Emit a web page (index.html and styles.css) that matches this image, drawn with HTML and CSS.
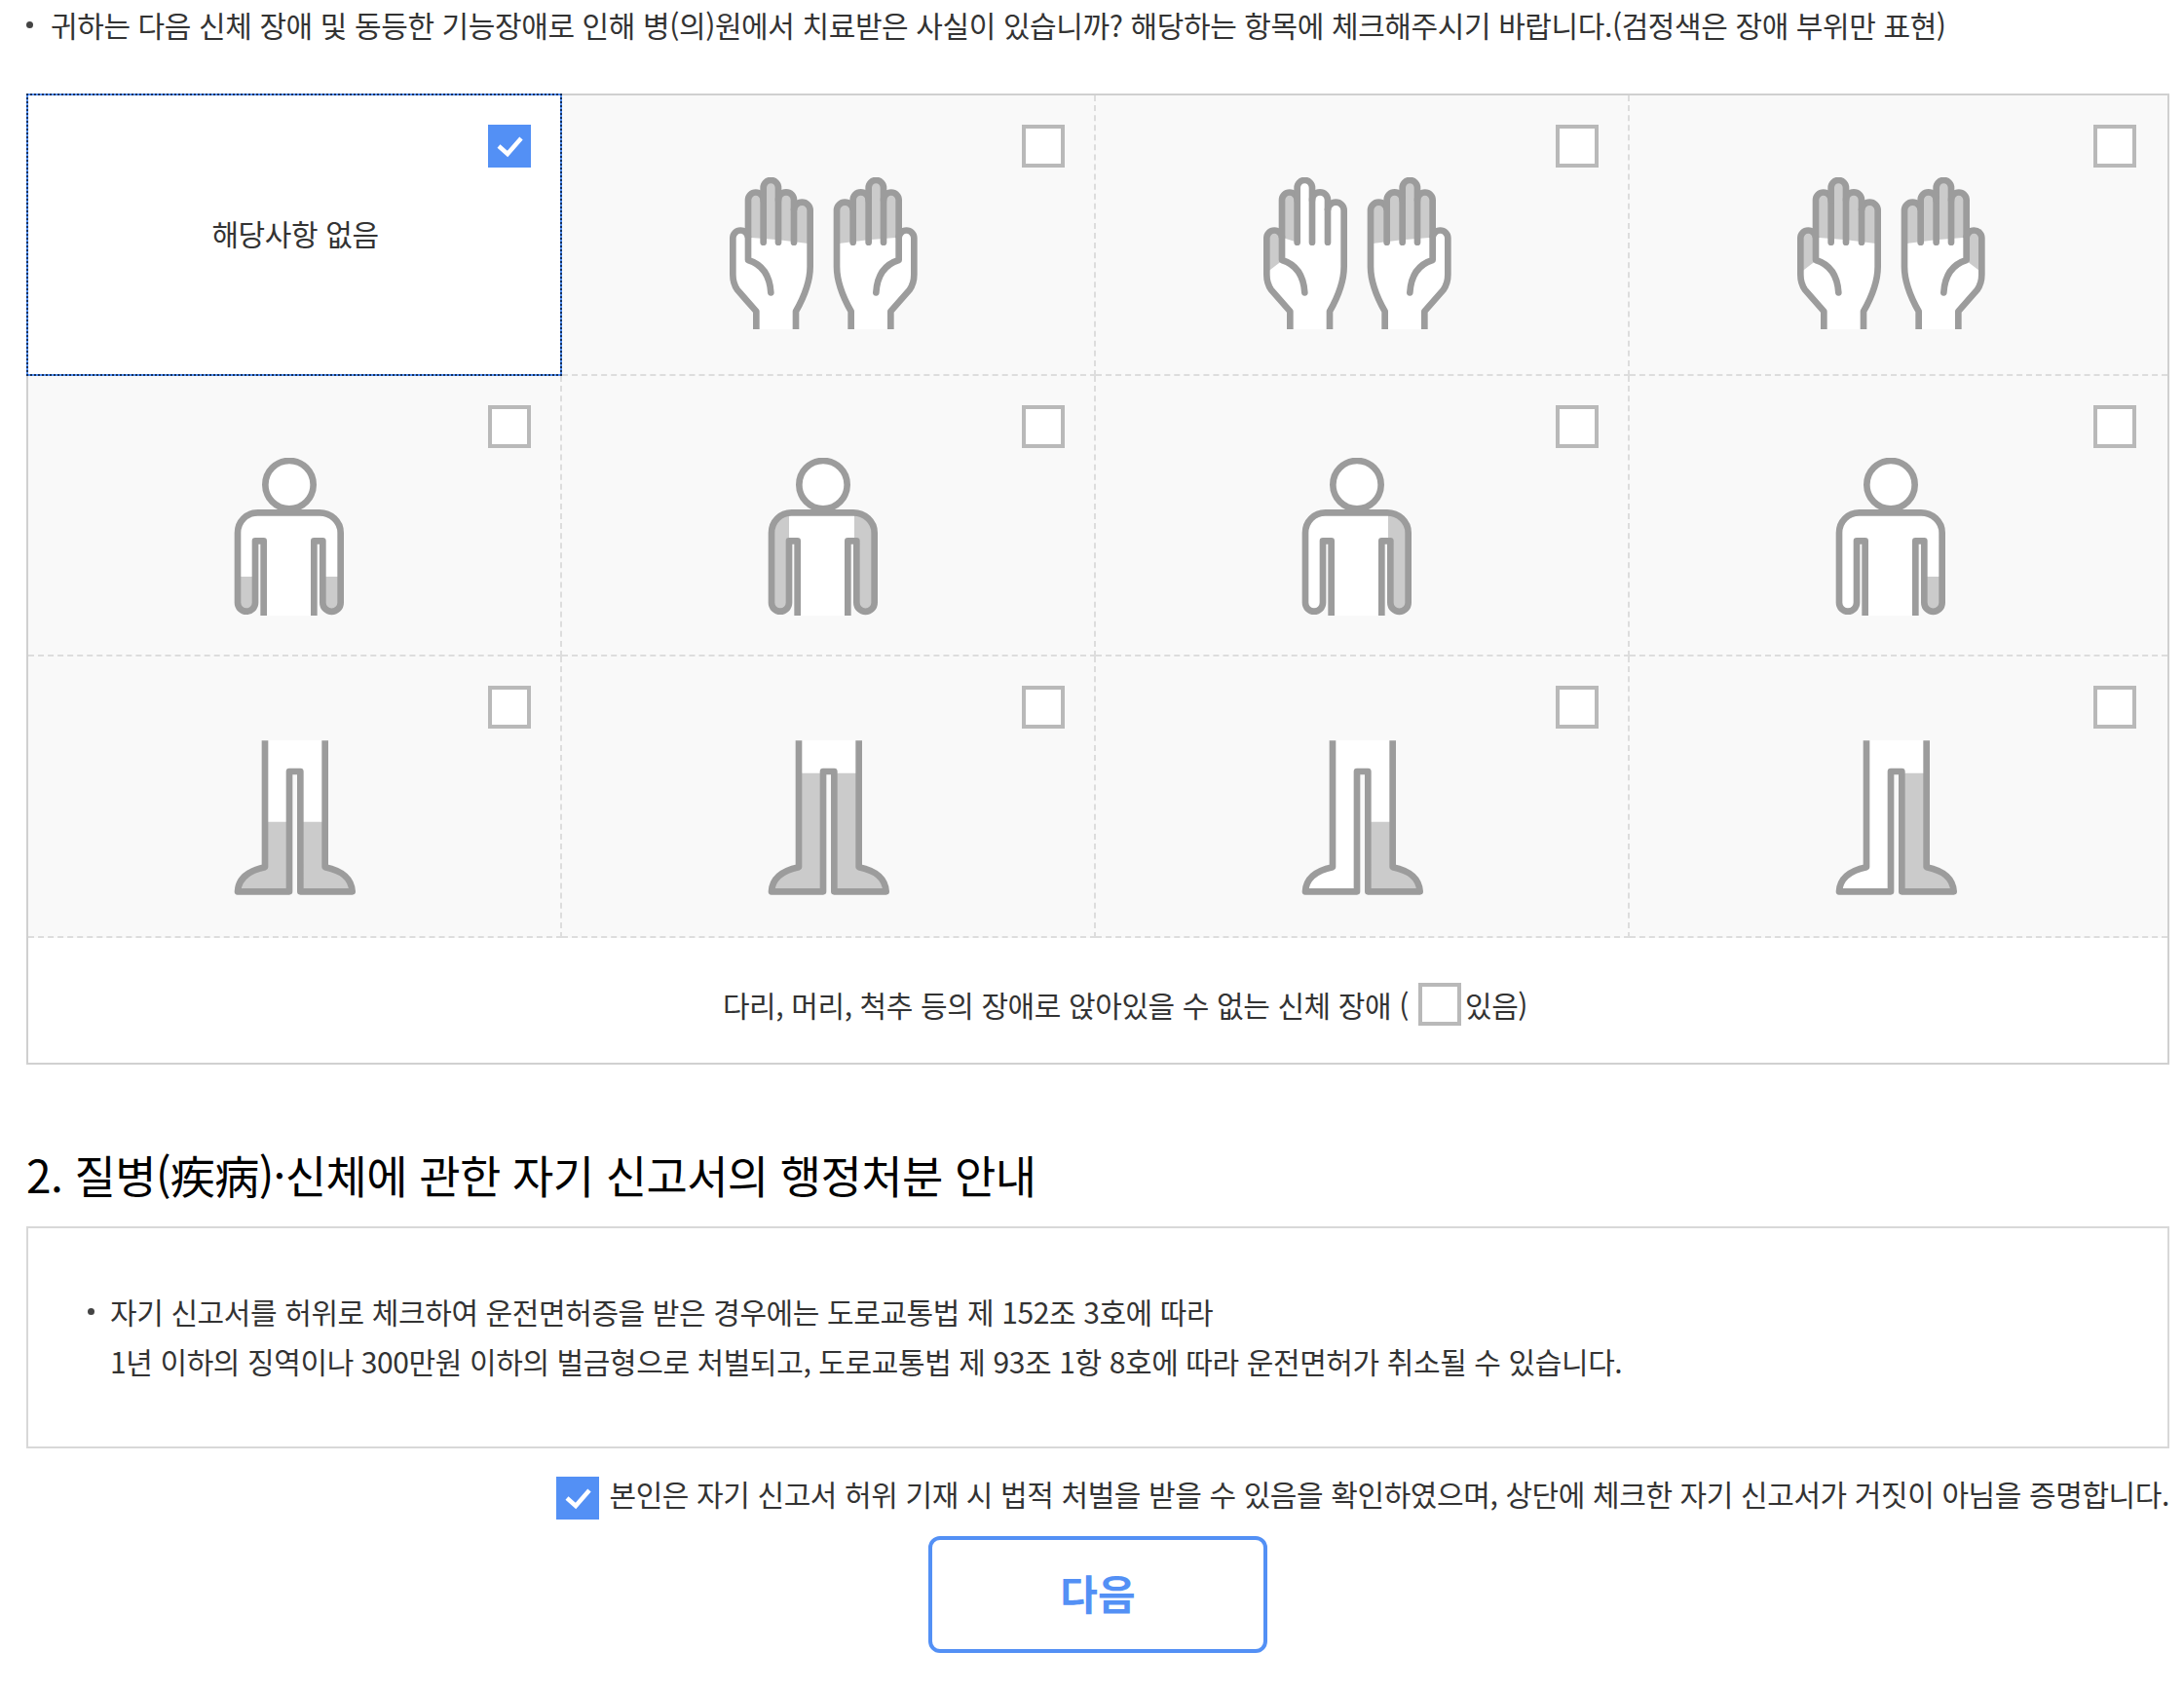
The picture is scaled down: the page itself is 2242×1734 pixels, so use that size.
FILE: index.html
```html
<!DOCTYPE html>
<html lang="ko">
<head>
    <meta charset="UTF-8">
    <meta name="viewport" content="width=device-width, initial-scale=1.0">
    <title>자기 신고서</title>
    <link rel="stylesheet" href="styles.css">
</head>
<body>

    <!-- shared pieces for the body part icons -->
    <svg class="icon-defs">
        <defs>
            <path id="hand-shape" class="skin" d="M230 533V478L172 412Q158 392 158 365V252A23.5 23.5 0 0 1 205 252V135A23.5 23.5 0 0 1 252 135V97A23 23 0 0 1 298 97V135A24 24 0 0 1 346 135V167A25 25 0 0 1 396 167V340Q396 400 352 478V533Z"/>
            <path id="hand-fingers-shade" class="shade" d="M205 250V135A23.5 23.5 0 0 1 252 135V97A23 23 0 0 1 298 97V135A24 24 0 0 1 346 135V167A25 25 0 0 1 396 167V270L300 258L205 250Z"/>
            <path id="hand-index-shade" class="shade" d="M205 250V135A23.5 23.5 0 0 1 252 135V265Z"/>
            <path id="hand-thumb-shade" class="shade" d="M158 358V252A23.5 23.5 0 0 1 205 252V322Z"/>
            <g id="hand-line" class="line">
                <path class="flat" d="M230 533V478L172 412Q158 392 158 365V252A23.5 23.5 0 0 1 205 252"/>
                <path class="flat" d="M346 167A25 25 0 0 1 396 167V340Q396 400 352 478V533"/>
                <path d="M275 420Q270 340 205 320V135A23.5 23.5 0 0 1 252 135V265"/>
                <path d="M252 135V97A23 23 0 0 1 298 97V265"/>
                <path d="M298 135A24 24 0 0 1 346 135V265"/>
            </g>
            <g id="hand-fingers">
                <use href="#hand-shape"/>
                <use href="#hand-fingers-shade"/>
                <use href="#hand-line"/>
            </g>
            <g id="hand-index">
                <use href="#hand-shape"/>
                <use href="#hand-index-shade"/>
                <use href="#hand-thumb-shade"/>
                <use href="#hand-line"/>
            </g>
            <g id="hand-all">
                <use href="#hand-shape"/>
                <use href="#hand-fingers-shade"/>
                <use href="#hand-thumb-shade"/>
                <use href="#hand-line"/>
            </g>

            <g id="person-shape" class="skin">
                <circle cx="262" cy="142" r="74"/>
                <path d="M103 505V290C103 255 130 228 165 228H355C390 228 420 255 420 290V505A27.5 27.5 0 0 1 365 505V315H338V545H183V315H157V505A27 27 0 0 1 103 505Z"/>
            </g>
            <g id="person-line" class="line">
                <circle cx="262" cy="142" r="74"/>
                <path class="flat" d="M183 545V315H157V505A27 27 0 0 1 103 505V290C103 255 130 228 165 228H355C390 228 420 255 420 290V505A27.5 27.5 0 0 1 365 505V315H338V545"/>
            </g>
            <path id="arm-left" class="shade" d="M155 228C125 228 103 255 103 290V505A27 27 0 0 0 157 505V240Z"/>
            <path id="arm-right" class="shade" d="M358 228C392 228 420 255 420 290V505A27.5 27.5 0 0 1 365 505V315H358Z"/>
            <path id="forearm-left" class="shade" d="M103 425V505A27 27 0 0 0 157 505V425Z"/>
            <path id="forearm-right" class="shade" d="M365 425V505A27.5 27.5 0 0 0 420 505V425Z"/>

            <path id="legs-shape" class="skin" d="M187 60V450C140 460 105 480 103 525H268V155H292V525H456C453 480 420 460 372 450V60Z"/>
            <path id="legs-line" class="line flat" d="M187 60V450C140 460 105 480 103 525H262V155H296V525H456C453 480 420 460 372 450V60"/>
            <path id="leg-left" class="shade" d="M187 160V450C140 460 105 480 103 525H262V160Z"/>
            <path id="leg-right" class="shade" d="M372 160V450C420 460 453 480 456 525H296V160Z"/>
            <path id="shin-left" class="shade" d="M187 310V450C140 460 105 480 103 525H262V310Z"/>
            <path id="shin-right" class="shade" d="M372 310V450C420 460 453 480 456 525H296V310Z"/>
        </defs>
    </svg>

    <ul class="intro">
        <li>귀하는 다음 신체 장애 및 동등한 기능장애로 인해 병(의)원에서 치료받은 사실이 있습니까? 해당하는 항목에 체크해주시기 바랍니다.(검정색은 장애 부위만 표현)</li>
    </ul>

    <div class="part-table">
        <!-- row 1 -->
        <label class="part-cell part-none">
            <span class="check is-checked cell-check"><svg viewBox="0 0 44 44"><path d="M11 22L20 30L34 14"/></svg></span>
            해당사항 없음
        </label>
        <label class="part-cell">
            <span class="check cell-check"></span>
            <svg class="part-icon" viewBox="148 65 600 486">
                <use href="#hand-fingers"/>
                <use href="#hand-fingers" transform="translate(874 0) scale(-1 1)"/>
            </svg>
        </label>
        <label class="part-cell">
            <span class="check cell-check"></span>
            <svg class="part-icon" viewBox="148 65 600 486">
                <use href="#hand-index"/>
                <use href="#hand-fingers" transform="translate(874 0) scale(-1 1)"/>
            </svg>
        </label>
        <label class="part-cell last">
            <span class="check cell-check"></span>
            <svg class="part-icon" viewBox="148 65 600 486">
                <use href="#hand-all"/>
                <use href="#hand-all" transform="translate(874 0) scale(-1 1)"/>
            </svg>
        </label>

        <!-- row 2 -->
        <label class="part-cell">
            <span class="check cell-check"></span>
            <svg class="part-icon" viewBox="-26 59 600 486">
                <use href="#person-shape"/>
                <use href="#forearm-left"/>
                <use href="#forearm-right"/>
                <use href="#person-line"/>
            </svg>
        </label>
        <label class="part-cell">
            <span class="check cell-check"></span>
            <svg class="part-icon" viewBox="-26 59 600 486">
                <use href="#person-shape"/>
                <use href="#arm-left"/>
                <use href="#arm-right"/>
                <use href="#person-line"/>
            </svg>
        </label>
        <label class="part-cell">
            <span class="check cell-check"></span>
            <svg class="part-icon" viewBox="-26 59 600 486">
                <use href="#person-shape"/>
                <use href="#arm-right"/>
                <use href="#person-line"/>
            </svg>
        </label>
        <label class="part-cell last">
            <span class="check cell-check"></span>
            <svg class="part-icon" viewBox="-26 59 600 486">
                <use href="#person-shape"/>
                <use href="#forearm-right"/>
                <use href="#person-line"/>
            </svg>
        </label>

        <!-- row 3 -->
        <label class="part-cell">
            <span class="check cell-check"></span>
            <svg class="part-icon" viewBox="-26 53 600 486">
                <use href="#legs-shape"/>
                <use href="#shin-left"/>
                <use href="#shin-right"/>
                <use href="#legs-line"/>
            </svg>
        </label>
        <label class="part-cell">
            <span class="check cell-check"></span>
            <svg class="part-icon" viewBox="-26 53 600 486">
                <use href="#legs-shape"/>
                <use href="#leg-left"/>
                <use href="#leg-right"/>
                <use href="#legs-line"/>
            </svg>
        </label>
        <label class="part-cell">
            <span class="check cell-check"></span>
            <svg class="part-icon" viewBox="-26 53 600 486">
                <use href="#legs-shape"/>
                <use href="#shin-right"/>
                <use href="#legs-line"/>
            </svg>
        </label>
        <label class="part-cell last">
            <span class="check cell-check"></span>
            <svg class="part-icon" viewBox="-26 53 600 486">
                <use href="#legs-shape"/>
                <use href="#leg-right"/>
                <use href="#legs-line"/>
            </svg>
        </label>

        <div class="part-extra">
            다리, 머리, 척추 등의 장애로 앉아있을 수 없는 신체 장애 (
            <span class="check"></span>
            <span class="part-extra-end">있음)</span>
        </div>
    </div>

    <h2 class="section-title">2. 질병(疾病)·신체에 관한 자기 신고서의 행정처분 안내</h2>

    <ul class="notice">
        <li><div>자기 신고서를 허위로 체크하여 운전면허증을 받은 경우에는 도로교통법 제 152조 3호에 따라<br>1년 이하의 징역이나 300만원 이하의 벌금형으로 처벌되고, 도로교통법 제 93조 1항 8호에 따라 운전면허가 취소될 수 있습니다.</div></li>
    </ul>

    <label class="confirm">
        <span class="check is-checked"><svg viewBox="0 0 44 44"><path d="M11 22L20 30L34 14"/></svg></span>
        <span class="confirm-text">본인은 자기 신고서 허위 기재 시 법적 처벌을 받을 수 있음을 확인하였으며, 상단에 체크한 자기 신고서가 거짓이 아님을 증명합니다.</span>
    </label>

    <div class="actions">
        <button class="next-button">다음</button>
    </div>

</body>
</html>
```

FILE: styles.css
```css
/* Basic reset */
* {
    margin: 0;
    padding: 0;
    box-sizing: border-box;
}

body {
    font-family: "Noto Sans CJK KR", "Noto Sans", sans-serif;
    font-size: 30px;
    letter-spacing: -0.4px;
    color: #333;
    background-color: #fff;
    width: 2227px;
    padding-left: 27px;
}

ul {
    list-style: none;
}

.icon-defs {
    display: none;
}

/* Top question */
.intro {
    height: 50px;
    margin-bottom: 46px;
}

.intro li {
    display: flex;
    align-items: center;
    height: 50px;
    line-height: 50px;
    gap: 18px;
}

.intro li::before,
.notice li::before {
    content: "";
    flex: none;
    width: 7px;
    height: 7px;
    border-radius: 50%;
    background-color: #444;
}

/* Checkboxes */
.check {
    display: block;
    flex: none;
    width: 44px;
    height: 44px;
    border: 4px solid #b9b9b9;
    background-color: #fff;
}

.check.is-checked {
    border: none;
    background-color: #5390f5;
}

.check svg {
    display: block;
    width: 44px;
    height: 44px;
}

.check svg path {
    fill: none;
    stroke: #fff;
    stroke-width: 4.5;
}

.cell-check {
    position: absolute;
    top: 30px;
    right: 30px;
}

/* Body part table */
.part-table {
    display: grid;
    grid-template-columns: 548px 548px 548px 1fr;
    grid-template-rows: 288px 288px 289px 128px;
    border: 2px solid #d0d0d0;
}

.part-cell {
    position: relative;
    display: block;
    padding: 84px 0 0 172px;
    background-color: #f9f9f9;
    border-right: 2px dashed #ddd;
    border-bottom: 2px dashed #ddd;
}

.part-cell.last {
    border-right: none;
}

.part-cell.last .cell-check {
    right: 32px;
}

.part-none {
    display: flex;
    align-items: center;
    justify-content: center;
    padding: 0 0 5px 2px;
    margin: -2px 0 0 -2px;
    background-color: #fff;
    border: 2px solid #5390f5;
    outline: 2px dotted #14305c;
    outline-offset: -2px;
}

.part-icon {
    display: block;
    width: 200px;
    height: 162px;
}

.skin {
    fill: #fff;
}

.shade {
    fill: #cbcbcb;
}

.line {
    fill: none;
    stroke: #9c9c9c;
    stroke-width: 20;
    stroke-linecap: round;
    stroke-linejoin: round;
}

.line .flat,
.line.flat {
    stroke-linecap: butt;
}

.part-extra {
    grid-column: 1 / -1;
    display: flex;
    align-items: center;
    justify-content: center;
    gap: 10px;
    padding-top: 8px;
    padding-left: 56px;
}

.part-extra-end {
    margin-left: -6px;
}

/* Second section */
.section-title {
    margin-top: 77px;
    margin-bottom: 19px;
    font-size: 46px;
    font-weight: 400;
    line-height: 70px;
    color: #000;
    letter-spacing: -0.6px;
}

.notice {
    width: 2200px;
    padding: 60px 61px 62px;
    border: 2px solid #d8d8d8;
    line-height: 51px;
}

.notice li {
    display: flex;
    gap: 16px;
}

.notice li::before {
    margin-top: 22px;
}

.confirm {
    display: flex;
    justify-content: flex-end;
    align-items: center;
    gap: 10px;
    width: 2200px;
    margin-top: 29px;
    height: 44px;
}

.confirm-text {
    margin-bottom: 10px;
}

.actions {
    display: flex;
    justify-content: center;
    width: 2200px;
    margin-top: 17px;
}

.next-button {
    width: 348px;
    height: 120px;
    padding-bottom: 6px;
    font-family: inherit;
    font-size: 42px;
    font-weight: 700;
    color: #5390f5;
    background-color: #fff;
    border: 4px solid #5390f5;
    border-radius: 12px;
    cursor: pointer;
}
```
